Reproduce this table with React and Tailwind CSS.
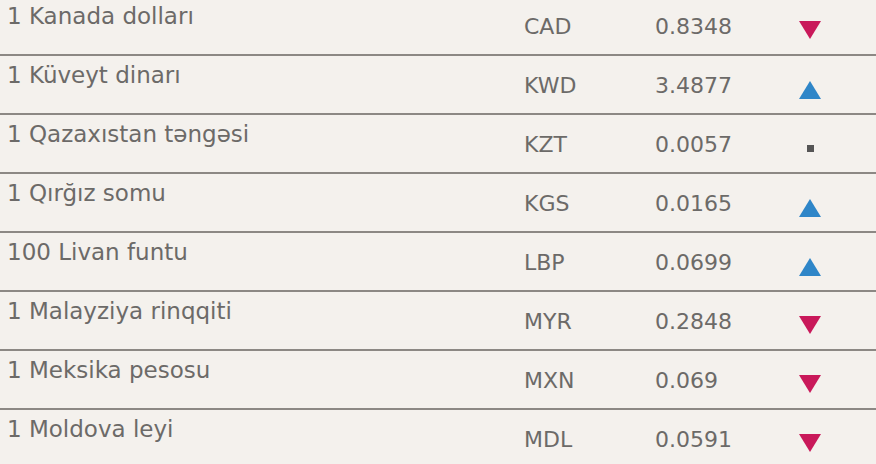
import React from "react";

const rows = [
  { name: "1 Kanada dolları", code: "CAD", value: "0.8348", trend: "down" },
  { name: "1 Küveyt dinarı", code: "KWD", value: "3.4877", trend: "up" },
  { name: "1 Qazaxıstan təngəsi", code: "KZT", value: "0.0057", trend: "flat" },
  { name: "1 Qırğız somu", code: "KGS", value: "0.0165", trend: "up" },
  { name: "100 Livan funtu", code: "LBP", value: "0.0699", trend: "up" },
  { name: "1 Malayziya rinqqiti", code: "MYR", value: "0.2848", trend: "down" },
  { name: "1 Meksika pesosu", code: "MXN", value: "0.069", trend: "down" },
  { name: "1 Moldova leyi", code: "MDL", value: "0.0591", trend: "down" },
];

function Trend({ trend }) {
  if (trend === "up") {
    return (
      <svg width="24" height="20" viewBox="0 0 24 20" className="mt-[24px]">
        <polygon points="12,1 23,19 1,19" fill="#2f86c8" />
      </svg>
    );
  }
  if (trend === "down") {
    return (
      <svg width="24" height="20" viewBox="0 0 24 20" className="mt-[23px]">
        <polygon points="1,1 23,1 12,19" fill="#c9195a" />
      </svg>
    );
  }
  return (
    <div className="w-[24px] flex justify-center mt-[30px]">
      <div className="w-[7px] h-[7px] bg-[#555]" />
    </div>
  );
}

export default function App() {
  return (
    <div
      className="w-[876px] h-[464px] overflow-hidden bg-[#f4f1ed] text-[#6c6a68]"
      style={{ fontFamily: '"DejaVu Sans", Verdana, sans-serif' }}
    >
      <div className="-mt-[3px]">
        {rows.map((r) => (
          <div
            key={r.code}
            className="flex items-start h-[59px] border-b-2 border-[#8c8884]"
          >
            <div className="w-[524px] pl-[7px] pt-[6px] text-[23px] leading-[26px] whitespace-nowrap">
              {r.name}
            </div>
            <div className="w-[131px] pt-[17px] text-[22px] leading-[26px]">
              {r.code}
            </div>
            <div className="w-[143px] pt-[17px] text-[22px] leading-[26px]">
              {r.value}
            </div>
            <Trend trend={r.trend} />
          </div>
        ))}
      </div>
    </div>
  );
}
